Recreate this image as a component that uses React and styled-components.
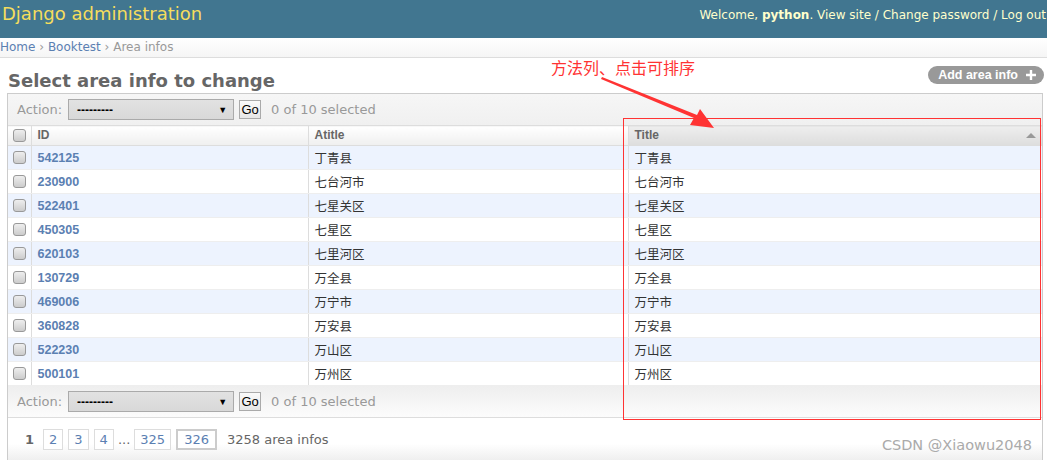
import React from "react";
import styled, { createGlobalStyle } from "styled-components";

const Global = createGlobalStyle`
  html, body { margin: 0; padding: 0; background: #fff; }
  body { width: 1047px; height: 460px; overflow: hidden; font-family: "DejaVu Sans", Verdana, sans-serif; color: #333; }
`;

const Page = styled.div`
  position: relative;
  width: 1047px;
  height: 460px;
  overflow: hidden;
`;

const Header = styled.div`
  height: 38px;
  box-sizing: border-box;
  padding-top: 3px;
  background: #417690;
  display: flex;
  align-items: flex-start;
  justify-content: space-between;
`;

const Brand = styled.h1`
  margin: 0 0 0 2px;
  font-size: 18px;
  line-height: 22px;
  font-weight: normal;
  color: #f5dd5d;
  white-space: nowrap;
`;

const UserTools = styled.div`
  margin-top: 5px;
  font-size: 12px;
  line-height: 15px;
  color: #ffc;
  white-space: nowrap;
  margin-right: 1px;
  b { font-weight: bold; }
`;

const Crumbs = styled.div`
  height: 19px;
  line-height: 19px;
  font-size: 12px;
  color: #999;
  background: linear-gradient(#fff, #f5f5f5);
  border-bottom: 1px solid #ddd;
  white-space: nowrap;
`;

const CrumbLink = styled.span`
  color: #5b80b2;
`;

const Content = styled.div`
  padding: 0 4px 0 7px;
`;

const TitleBar = styled.div`
  display: flex;
  justify-content: space-between;
  align-items: flex-start;
  height: 35px;
`;

const Heading = styled.h1`
  margin: 12px 0 0 1px;
  font-size: 18px;
  line-height: 22px;
  font-weight: bold;
  color: #666;
  white-space: nowrap;
`;

const AddButton = styled.span`
  margin-top: 8px;
  margin-right: -1px;
  height: 18px;
  display: inline-flex;
  align-items: center;
  gap: 7px;
  padding: 0 7px 0 10px;
  border-radius: 9px;
  background: #999;
  color: #fff;
  font-family: "Liberation Sans", Arial, sans-serif;
  font-weight: bold;
  font-size: 12.5px;
`;

const Module = styled.div`
  border: 1px solid #ccc;
  border-bottom: none;
  height: 400px;
`;

const Actions = styled.div`
  height: 31px;
  display: flex;
  align-items: center;
  padding-left: 9px;
  background: linear-gradient(${p => (p.$bottom ? "#eee, #fcfcfc" : "#f6f6f6, #f0f0f0")});
  border-bottom: ${p => (p.$bottom ? "1px solid #ddd" : "none")};
  font-size: 13px;
  color: #999;
`;

const Select = styled.span`
  margin-left: 6px;
  box-sizing: border-box;
  width: 166px;
  height: 21px;
  border: 1px solid #aaa;
  background: linear-gradient(#e2e2e2, #d8d8d8);
  display: flex;
  align-items: center;
  justify-content: space-between;
  padding: 0 6px 0 8px;
  color: #000;
  font-family: "Liberation Sans", Arial, sans-serif;
  font-size: 12px;
  font-weight: bold;
`;

const Caret = styled.span`
  font-size: 9px;
  color: #000;
`;

const GoButton = styled.span`
  margin-left: 5px;
  height: 19px;
  width: 22px;
  box-sizing: border-box;
  border: 1px solid #aaa;
  background: linear-gradient(#fafafa, #e6e6e6);
  color: #000;
  font-family: "Liberation Sans", Arial, sans-serif;
  font-size: 13px;
  display: flex;
  align-items: center;
  justify-content: center;
`;

const Counter = styled.span`
  margin-left: 10px;
  color: #999;
`;

const Table = styled.table`
  width: 100%;
  border-collapse: collapse;
  table-layout: fixed;
`;

const Th = styled.th`
  height: 19px;
  line-height: 19px;
  padding: 0 0 0 ${p => (p.$check ? "5px" : "6px")};
  text-align: left;
  font-family: "Liberation Sans", Arial, sans-serif;
  font-size: 12px;
  font-weight: bold;
  color: #666;
  background: ${p => (p.$sorted ? "linear-gradient(#eee, #ddd)" : "linear-gradient(#fff, #efefef)")};
  border-top: 1px solid #ddd;
  border-bottom: 1px solid #ddd;
  border-left: ${p => (p.$first ? "none" : "1px solid #ddd")};
  position: relative;
`;

const SortArrow = styled.span`
  position: absolute;
  right: 6px;
  top: 7px;
  width: 0;
  height: 0;
  border-left: 5px solid transparent;
  border-right: 5px solid transparent;
  border-bottom: 5px solid #999;
`;

const Tr = styled.tr`
  background: ${p => (p.$odd ? "#edf3fe" : "#fff")};
`;

const Td = styled.td`
  height: 23px;
  line-height: 16px;
  padding: 0 0 0 ${p => (p.$check ? "5px" : "6px")};
  border-bottom: 1px solid #eee;
  border-left: ${p => (p.$first ? "none" : "1px solid #ddd")};
  font-family: ${p => (p.$link ? '"Liberation Sans", Arial, sans-serif' : '"Noto Sans CJK SC", sans-serif')};
  font-size: 12.5px;
  font-weight: ${p => (p.$link ? "bold" : "normal")};
  color: ${p => (p.$link ? "#5b80b2" : "#333")};
  white-space: nowrap;
  overflow: hidden;
`;

const Check = styled.span`
  display: block;
  width: 11px;
  height: 11px;
  border: 1px solid #999;
  border-radius: 3px;
  background: linear-gradient(#eee, #ccc);
`;

const Paginator = styled.div`
  height: 43px;
  display: flex;
  align-items: center;
  gap: 5px;
  padding-left: 17px;
  font-size: 13px;
  color: #666;
  background: linear-gradient(#fff 60%, #eee);
`;

const This = styled.span`
  font-weight: bold;
  color: #666;
  margin-right: 4px;
`;

const PageLink = styled.span`
  height: ${p => (p.$end ? "17px" : "19px")};
  line-height: ${p => (p.$end ? "17px" : "19px")};
  padding: 0 ${p => (p.$end ? "6px" : "5px")};
  border: ${p => (p.$end ? "2px solid #ccc" : "1px solid #ddd")};
  color: #5b80b2;
  background: #fff;
`;

const Ellipsis = styled.span`
  color: #666;
  margin: 0 -1px;
`;

const Total = styled.span`
  margin-left: 5px;
  color: #666;
`;

const Note = styled.div`
  position: absolute;
  left: 551px;
  top: 55px;
  font-family: "Noto Sans CJK SC", sans-serif;
  font-size: 16px;
  color: #ff3333;
  white-space: nowrap;
`;

const RedBox = styled.div`
  position: absolute;
  left: 623px;
  top: 118px;
  width: 416px;
  height: 300px;
  border: 1px solid #f33;
`;

const Arrow = styled.svg`
  position: absolute;
  left: 0;
  top: 0;
`;

const Watermark = styled.div`
  position: absolute;
  right: 15px;
  top: 437px;
  font-family: "DejaVu Sans", sans-serif;
  font-size: 14.5px;
  color: #aaa;
  white-space: nowrap;
`;

const rows = [
  ["542125", "丁青县"],
  ["230900", "七台河市"],
  ["522401", "七星关区"],
  ["450305", "七星区"],
  ["620103", "七里河区"],
  ["130729", "万全县"],
  ["469006", "万宁市"],
  ["360828", "万安县"],
  ["522230", "万山区"],
  ["500101", "万州区"],
];

function ActionBar({ bottom }) {
  return (
    <Actions $bottom={bottom}>
      Action:
      <Select>
        <span>---------</span>
        <Caret>▼</Caret>
      </Select>
      <GoButton>Go</GoButton>
      <Counter>0 of 10 selected</Counter>
    </Actions>
  );
}

export default function App() {
  return (
    <Page>
      <Global />
      <Header>
        <Brand>Django administration</Brand>
        <UserTools>
          Welcome, <b>python</b>. View site / Change password / Log out
        </UserTools>
      </Header>
      <Crumbs>
        <CrumbLink>Home</CrumbLink> › <CrumbLink>Booktest</CrumbLink> › Area infos
      </Crumbs>
      <Content>
        <TitleBar>
          <Heading>Select area info to change</Heading>
          <AddButton>
            Add area info
            <svg width="12" height="12" viewBox="0 0 12 12">
              <path d="M6 1v10M1 6h10" stroke="#fff" strokeWidth="2.4" />
            </svg>
          </AddButton>
        </TitleBar>
        <Module>
          <ActionBar />
          <Table>
            <colgroup>
              <col style={{ width: 23 }} />
              <col style={{ width: 277 }} />
              <col style={{ width: 320 }} />
              <col />
            </colgroup>
            <thead>
              <tr>
                <Th $check $first><Check /></Th>
                <Th>ID</Th>
                <Th>Atitle</Th>
                <Th $sorted>Title<SortArrow /></Th>
              </tr>
            </thead>
            <tbody>
              {rows.map(([id, name], i) => (
                <Tr key={id} $odd={i % 2 === 0}>
                  <Td $check $first><Check /></Td>
                  <Td $link>{id}</Td>
                  <Td>{name}</Td>
                  <Td>{name}</Td>
                </Tr>
              ))}
            </tbody>
          </Table>
          <ActionBar bottom />
          <Paginator>
            <This>1</This>
            <PageLink>2</PageLink>
            <PageLink>3</PageLink>
            <PageLink>4</PageLink>
            <Ellipsis>...</Ellipsis>
            <PageLink>325</PageLink>
            <PageLink $end>326</PageLink>
            <Total>3258 area infos</Total>
          </Paginator>
        </Module>
      </Content>
      <Note>方法列、点击可排序</Note>
      <RedBox />
      <Arrow width="1047" height="460">
        <polygon points="602,77 697,115 700,109 714,128 690,125 694,118 601,79" fill="#f33" />
      </Arrow>
      <Watermark>CSDN @Xiaowu2048</Watermark>
    </Page>
  );
}
